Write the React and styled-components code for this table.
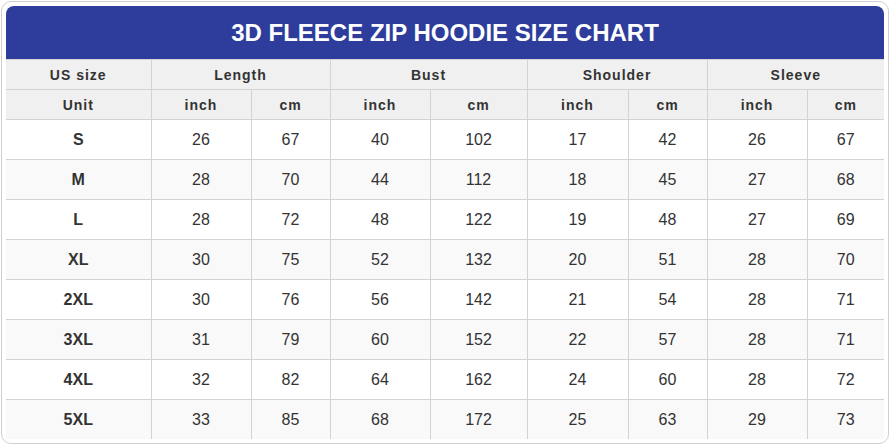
import React from "react";
import styled, { createGlobalStyle } from "styled-components";

const Global = createGlobalStyle`
  html, body { margin: 0; padding: 0; background: #fff; }
  body { font-family: "Liberation Sans", Arial, sans-serif; }
`;

const Card = styled.div`
  margin: 1px;
  width: 888px;
  height: 443px;
  box-sizing: border-box;
  border: 1px solid #cfcfcf;
  border-radius: 10px;
  padding: 4px;
  background: #fff;
`;

const Inner = styled.div`
  border-radius: 8px 8px 0 0;
  overflow: hidden;
`;

const Title = styled.div`
  height: 53px;
  background: #2e3d9b;
  color: #fff;
  font-size: 24px;
  font-weight: bold;
  display: flex;
  align-items: center;
  justify-content: center;
  border-bottom: 1px solid #d3d3d3;
`;

const Table = styled.table`
  width: 878px;
  border-collapse: collapse;
  table-layout: fixed;
`;

const Th = styled.th`
  height: 29px;
  padding: 0;
  background: #f0f0f0;
  color: #333;
  font-size: 14px;
  font-weight: bold;
  letter-spacing: 1px;
  text-align: center;
  border: 1px solid #d3d3d3;
  border-top: none;
  &:first-child { border-left: none; }
  &:last-child { border-right: none; }
`;

const Tr = styled.tr`
  background: ${(p) => (p.$alt ? "#f9f9f9" : "#fff")};
  &:last-child td { border-bottom: none; }
`;

const Td = styled.td`
  height: 39px;
  padding: 0;
  text-align: center;
  color: #333;
  font-size: 16px;
  font-weight: ${(p) => (p.$bold ? "bold" : "normal")};
  border: 1px solid #d3d3d3;
  &:first-child { border-left: none; }
  &:last-child { border-right: none; }
`;

const widths = [145, 100, 79, 100, 97, 101, 79, 100, 77];

const rows = [
  ["S", 26, 67, 40, 102, 17, 42, 26, 67],
  ["M", 28, 70, 44, 112, 18, 45, 27, 68],
  ["L", 28, 72, 48, 122, 19, 48, 27, 69],
  ["XL", 30, 75, 52, 132, 20, 51, 28, 70],
  ["2XL", 30, 76, 56, 142, 21, 54, 28, 71],
  ["3XL", 31, 79, 60, 152, 22, 57, 28, 71],
  ["4XL", 32, 82, 64, 162, 24, 60, 28, 72],
  ["5XL", 33, 85, 68, 172, 25, 63, 29, 73],
];

export default function App() {
  return (
    <>
      <Global />
      <Card>
        <Inner>
          <Title>3D FLEECE ZIP HOODIE SIZE CHART</Title>
          <Table>
            <colgroup>
              {widths.map((w, i) => (
                <col key={i} style={{ width: w }} />
              ))}
            </colgroup>
            <thead>
              <tr>
                <Th>US size</Th>
                <Th colSpan={2}>Length</Th>
                <Th colSpan={2}>Bust</Th>
                <Th colSpan={2}>Shoulder</Th>
                <Th colSpan={2}>Sleeve</Th>
              </tr>
              <tr>
                <Th>Unit</Th>
                {["inch", "cm", "inch", "cm", "inch", "cm", "inch", "cm"].map((u, i) => (
                  <Th key={i}>{u}</Th>
                ))}
              </tr>
            </thead>
            <tbody>
              {rows.map((r, i) => (
                <Tr key={r[0]} $alt={i % 2 === 1}>
                  {r.map((c, j) => (
                    <Td key={j} $bold={j === 0}>
                      {c}
                    </Td>
                  ))}
                </Tr>
              ))}
            </tbody>
          </Table>
        </Inner>
      </Card>
    </>
  );
}
